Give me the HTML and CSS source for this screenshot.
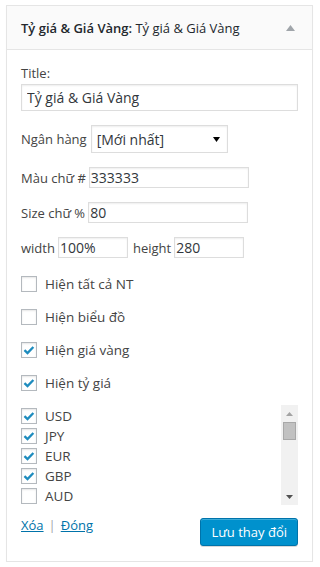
FILE: index.html
```html
<!DOCTYPE html>
<html lang="vi">

<head>
    <meta charset="UTF-8">
    <meta name="viewport" content="width=device-width, initial-scale=1.0">
    <title>Widget</title>
    <link rel="stylesheet" href="styles.css">
</head>

<body>

    <div class="widget">
        <div class="widget-top">
            <h3 class="widget-title">Tỷ giá &amp; Giá Vàng:<span class="in-title"> Tỷ giá &amp; Giá Vàng</span></h3>
            <svg class="toggle" width="9" height="6" viewBox="0 0 9 6"><polygon points="4.5,0 9,6 0,6" /></svg>
        </div>

        <div class="widget-inside">
            <label class="title-label" for="title">Title:</label>
            <input class="text wide" id="title" type="text" value="Tỷ giá &amp; Giá Vàng">

            <div class="row">
                <span class="lbl">Ngân hàng</span>
                <div class="select">
                    <span>[Mới nhất]</span>
                    <svg width="7" height="5" viewBox="0 0 7 5"><polygon points="0,0 7,0 3.5,5" /></svg>
                </div>
            </div>

            <div class="row">
                <span class="lbl">Màu chữ #</span>
                <input class="text small" type="text" value="333333">
            </div>

            <div class="row">
                <span class="lbl">Size chữ %</span>
                <input class="text small" type="text" value="80">
            </div>

            <div class="row">
                <span class="lbl">width</span>
                <input class="text tiny" type="text" value="100%">
                <span class="lbl">height</span>
                <input class="text tiny" type="text" value="280">
            </div>

            <!-- cac tuy chon hien thi -->
            <div class="checks">
                <label class="check"><span class="cb"></span>Hiện tất cả NT</label>
                <label class="check"><span class="cb"></span>Hiện biểu đồ</label>
                <label class="check"><span class="cb on"><svg viewBox="0 0 16 16"><path d="M2.8 8.2 L6.3 11.6 L13 4.6" /></svg></span>Hiện giá vàng</label>
                <label class="check"><span class="cb on"><svg viewBox="0 0 16 16"><path d="M2.8 8.2 L6.3 11.6 L13 4.6" /></svg></span>Hiện tỷ giá</label>
            </div>

            <!-- danh sach ngoai te -->
            <div class="currency">
                <ul class="cur-list">
                    <li><span class="cb on"><svg viewBox="0 0 16 16"><path d="M2.8 8.2 L6.3 11.6 L13 4.6" /></svg></span>USD</li>
                    <li><span class="cb on"><svg viewBox="0 0 16 16"><path d="M2.8 8.2 L6.3 11.6 L13 4.6" /></svg></span>JPY</li>
                    <li><span class="cb on"><svg viewBox="0 0 16 16"><path d="M2.8 8.2 L6.3 11.6 L13 4.6" /></svg></span>EUR</li>
                    <li><span class="cb on"><svg viewBox="0 0 16 16"><path d="M2.8 8.2 L6.3 11.6 L13 4.6" /></svg></span>GBP</li>
                    <li><span class="cb"></span>AUD</li>
                    <li><span class="cb"></span>CAD</li>
                </ul>
                <div class="scrollbar">
                    <span class="sb-btn"><svg width="7" height="4" viewBox="0 0 7 4"><polygon points="3.5,0 7,4 0,4" /></svg></span>
                    <span class="sb-thumb"></span>
                    <span class="sb-space"></span>
                    <span class="sb-btn down"><svg width="7" height="4" viewBox="0 0 7 4"><polygon points="0,0 7,0 3.5,4" /></svg></span>
                </div>
            </div>

            <div class="actions">
                <div class="links">
                    <a href="#">Xóa</a>
                    <span class="sep">|</span>
                    <a href="#">Đóng</a>
                </div>
                <button class="button-primary" type="button">Lưu thay đổi</button>
            </div>
        </div>
    </div>

</body>

</html>
```

FILE: styles.css
```css
* {
    margin: 0;
    padding: 0;
    box-sizing: border-box;
}

body {
    padding: 5px 0 0 6px;
    background: #fff;
    font-family: "Open Sans", "Liberation Sans", sans-serif;
    font-size: 13px;
    color: #444;
}

ul {
    list-style: none;
}

.widget {
    width: 307px;
    border: 1px solid #e5e5e5;
    box-shadow: 0 1px 1px rgba(0, 0, 0, .04);
    background: #fff;
}

.widget-top {
    height: 44px;
    padding: 0 17px 0 14px;
    background: #fafafa;
    border-bottom: 1px solid #e5e5e5;
    display: flex;
    align-items: center;
    justify-content: space-between;
}

.widget-title {
    font-size: 13px;
    font-weight: 600;
    color: #23282d;
}

.in-title {
    font-weight: 400;
}

.toggle {
    fill: #a0a5aa;
}

.widget-inside {
    padding: 14px 14px 15px;
}

.title-label {
    display: block;
    line-height: 18px;
    margin-bottom: 2px;
}

.text {
    font-family: inherit;
    font-size: 14px;
    color: #32373c;
    border: 1px solid #ddd;
    box-shadow: inset 0 1px 2px rgba(0, 0, 0, .07);
    background: #fff;
    outline: none;
}

.wide {
    display: block;
    width: 277px;
    height: 27px;
    padding: 0 5px;
}

.row {
    display: flex;
    align-items: center;
    gap: 3px;
    margin-top: 14px;
}

.small {
    width: 160px;
    height: 21px;
    padding: 0 1px;
}

.tiny {
    width: 70px;
    height: 21px;
    padding: 0 1px;
}

.tiny + .lbl {
    margin-left: 2px;
}

.select {
    width: 137px;
    height: 28px;
    margin-left: 1px;
    padding: 0 7px 0 5px;
    border: 1px solid #ddd;
    box-shadow: inset 0 1px 2px rgba(0, 0, 0, .07);
    display: flex;
    align-items: center;
    justify-content: space-between;
    font-size: 14px;
    color: #32373c;
}

.checks {
    margin-top: 18px;
    display: flex;
    flex-direction: column;
    gap: 17px;
}

.check {
    display: flex;
    align-items: center;
    height: 16px;
    font-size: 13.5px;
}

.cb {
    width: 16px;
    height: 16px;
    margin-right: 8px;
    border: 1px solid #b4b9be;
    background: #fff;
    box-shadow: inset 0 1px 2px rgba(0, 0, 0, .1);
    flex: none;
}

.cb svg {
    display: block;
    width: 14px;
    height: 14px;
    fill: none;
    stroke: #1e8cbe;
    stroke-width: 2.6;
}

.currency {
    margin-top: 14px;
    height: 100px;
    display: flex;
}

.cur-list {
    flex: 1;
    overflow: hidden;
    padding-top: 1px;
}

.cur-list li {
    height: 20px;
    display: flex;
    align-items: center;
    font-size: 13.5px;
}

.scrollbar {
    width: 17px;
    background: #f1f1f1;
    display: flex;
    flex-direction: column;
}

.sb-btn {
    height: 17px;
    display: flex;
    align-items: center;
    justify-content: center;
    fill: #a3a3a3;
}

.sb-btn.down {
    fill: #505050;
}

.sb-thumb {
    height: 18px;
    margin: 0 2px;
    background: #c1c1c1;
    border: 1px solid #a8a8a8;
}

.sb-space {
    flex: 1;
}

.actions {
    margin-top: 13px;
    display: flex;
    justify-content: space-between;
    align-items: flex-start;
}

.links {
    display: flex;
    align-items: center;
    gap: 5px;
    height: 24px;
    margin-top: -5px;
}

.links a {
    color: #0073aa;
    line-height: 24px;
}

.sep {
    color: #a0a5aa;
}

.button-primary {
    height: 28px;
    padding: 0 10px;
    font-family: inherit;
    font-size: 13px;
    color: #fff;
    background: #0091cd;
    border: 1px solid #0073aa;
    border-radius: 3px;
    box-shadow: inset 0 1px 0 rgba(120, 200, 230, .5), 0 1px 0 rgba(0, 0, 0, .15);
}
```
